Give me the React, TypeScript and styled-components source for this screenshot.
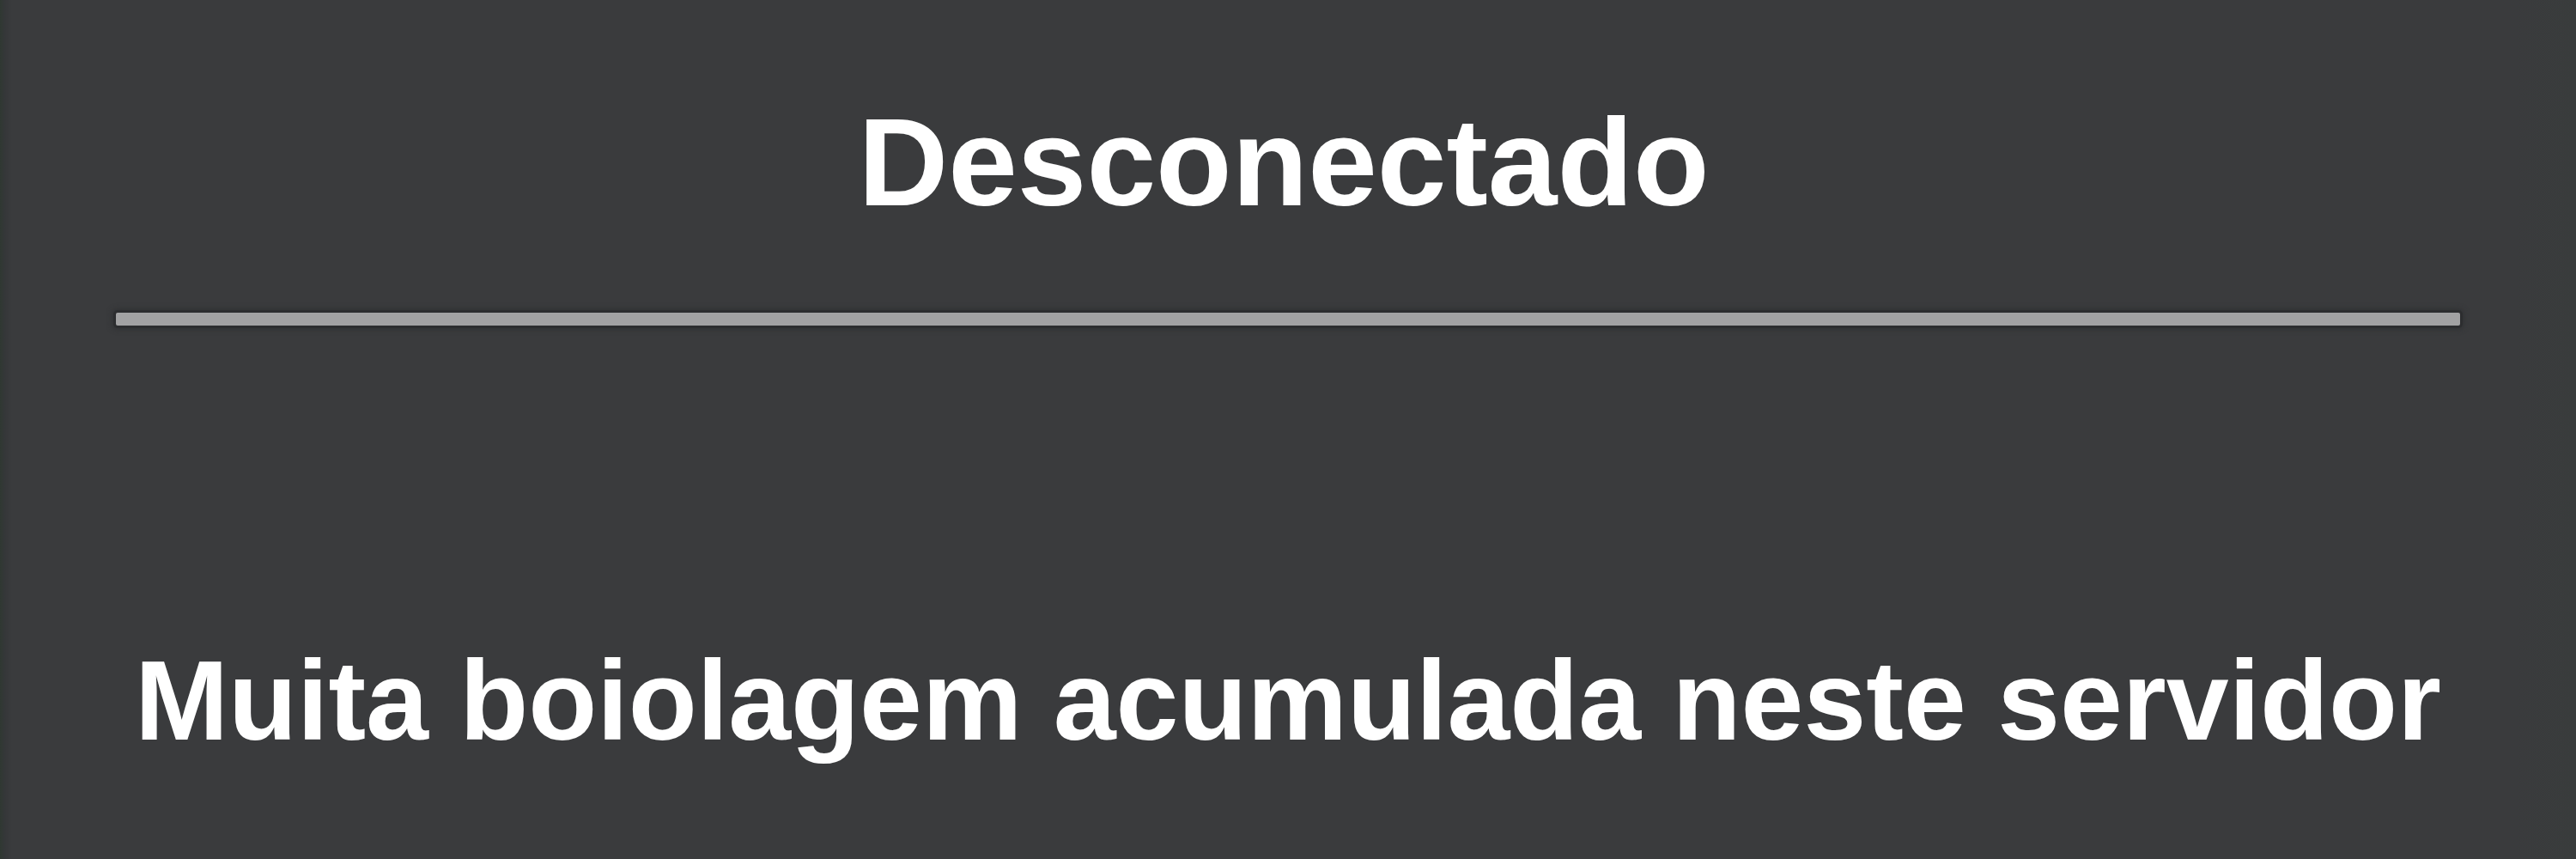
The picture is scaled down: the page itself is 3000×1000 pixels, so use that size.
import React from "react";
import styled, { createGlobalStyle } from "styled-components";

const GlobalStyle = createGlobalStyle`
  html, body {
    margin: 0;
    padding: 0;
    background: #3a3b3d;
  }
  #root {
    min-height: 1000px;
  }
`;

const Screen = styled.main`
  box-sizing: border-box;
  width: 3000px;
  height: 1000px;
  display: flex;
  flex-direction: column;
  align-items: center;
  padding-top: 117px;
  background:
    linear-gradient(90deg, #2f3832 0px, #353739 6px, #3a3b3d 14px, #3a3b3d 2930px, #393c3c 3000px);
  font-family: "Liberation Sans", Arial, sans-serif;
  color: #ffffff;
  overflow: hidden;
`;

const Title = styled.h1`
  margin: 0;
  padding-right: 10px;
  font-size: 145px;
  line-height: 145px;
  font-weight: 700;
  letter-spacing: 0;
  text-align: center;
`;

const Divider = styled.hr`
  box-sizing: border-box;
  width: 2730px;
  height: 15px;
  margin: 102px 0 0 0;
  border: none;
  border-radius: 2px;
  background: #a2a2a3;
  box-shadow: 0 0 0 3px #2c2d2f, 0 0 6px 4px rgba(40, 41, 43, 0.6);
`;

const Message = styled.p`
  margin: 371px 0 0 0;
  font-size: 131px;
  line-height: 131px;
  font-weight: 700;
  text-align: center;
  white-space: nowrap;
`;

export default function App() {
  return (
    <>
      <GlobalStyle />
      <Screen>
        <Title>Desconectado</Title>
        <Divider />
        <Message>Muita boiolagem acumulada neste servidor</Message>
      </Screen>
    </>
  );
}
